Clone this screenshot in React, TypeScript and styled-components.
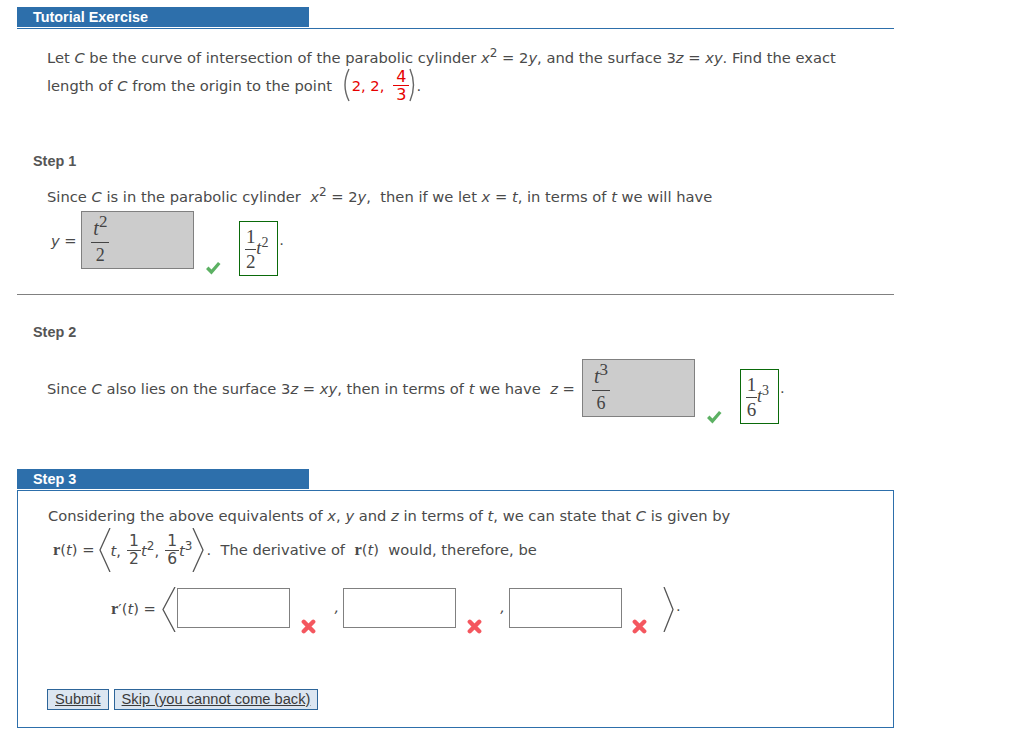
import styled, { createGlobalStyle } from 'styled-components';
import type { ReactNode } from 'react';

const GlobalStyle = createGlobalStyle`
  html, body {
    margin: 0;
    background: #fff;
  }
`;

const BLUE = '#2d6fab';
const TEXT = '#4a4a4a';

const Page = styled.div`
  width: 877px;
  padding: 7px 0 0 17px;
  color: ${TEXT};
  font-family: 'DejaVu Sans', Verdana, sans-serif;
  font-size: 14.7px;
`;

const TitleTab = styled.div`
  width: 276px;
  height: 20px;
  padding-left: 16px;
  background: ${BLUE};
  color: #fff;
  font: bold 14.4px/20px 'Liberation Sans', Arial, sans-serif;
`;

const Rule = styled.div<{ $color: string; $top: number }>`
  height: 1px;
  margin-top: ${(p) => p.$top}px;
  background: ${(p) => p.$color};
`;

const Prompt = styled.div`
  margin: 14px 0 0 30px;
  width: 820px;
`;

const Line = styled.div<{ $height: number }>`
  display: flex;
  align-items: center;
  height: ${(p) => p.$height}px;
  white-space: pre;
`;

const Run = styled.span<{ $left?: number }>`
  margin-left: ${(p) => p.$left ?? 0}px;
`;

const StepLabel = styled.div<{ $top: number }>`
  margin: ${(p) => p.$top}px 0 0 16px;
  color: #555;
  font: bold 14.4px/18px 'Liberation Sans', Arial, sans-serif;
`;

const StepBody = styled.div<{ $top: number }>`
  margin: ${(p) => p.$top}px 0 0 30px;
`;

const AnswerRow = styled.div<{ $height: number; $top: number; $left?: number }>`
  display: flex;
  align-items: flex-start;
  height: ${(p) => p.$height}px;
  margin: ${(p) => p.$top}px 0 0 ${(p) => p.$left ?? 0}px;
  white-space: pre;
`;

const Inline = styled.span<{ $top: number; $left?: number; $right?: number }>`
  margin: ${(p) => p.$top}px ${(p) => p.$right ?? 0}px 0 ${(p) => p.$left ?? 0}px;
  line-height: 18px;
`;

const I = styled.i`
  font-style: italic;
`;

const Sup = styled.sup`
  font-size: 12px;
  line-height: 0;
`;

const Red = styled.span`
  display: inline-flex;
  align-items: center;
  color: #e60000;
`;

const Bold = styled.b`
  font-family: 'Liberation Serif', serif;
  font-size: 16.5px;
`;

const Frac = styled.span<{ $width: number; $left?: number }>`
  display: inline-flex;
  flex-direction: column;
  align-items: center;
  width: ${(p) => p.$width}px;
  margin-left: ${(p) => p.$left ?? 0}px;
`;

const Top = styled.span<{ $size: number; $height: number }>`
  height: ${(p) => p.$height}px;
  font-size: ${(p) => p.$size}px;
  line-height: ${(p) => p.$height}px;
  border-bottom: 1px solid currentColor;
  align-self: stretch;
  text-align: center;
  white-space: nowrap;
`;

const Bottom = styled.span<{ $size: number; $height: number }>`
  height: ${(p) => p.$height}px;
  font-size: ${(p) => p.$size}px;
  line-height: ${(p) => p.$height}px;
`;

const Filled = styled.div<{ $left: number }>`
  box-sizing: border-box;
  flex: none;
  width: 113px;
  height: 58px;
  margin-left: ${(p) => p.$left}px;
  padding: 3px 0 0 9px;
  border: 1px solid #808080;
  background: #ccc;
  color: #444;
  font-family: 'Liberation Serif', serif;
`;

const Correct = styled.div`
  display: flex;
  align-items: center;
  flex: none;
  box-sizing: border-box;
  width: 39px;
  height: 55px;
  margin: 10px 0 0 18px;
  padding-left: 5px;
  border: 1px solid #0a6a0a;
  color: #444;
  font-family: 'Liberation Serif', serif;
`;

const MathPower = styled.span<{ $size: number; $exp: number }>`
  font-style: italic;
  font-size: ${(p) => p.$size}px;
  sup {
    font-style: normal;
    font-size: ${(p) => p.$exp}px;
    line-height: 0;
  }
`;

const Mark = styled.svg<{ $top: number; $left: number }>`
  flex: none;
  margin: ${(p) => p.$top}px 0 0 ${(p) => p.$left}px;
`;

const Panel = styled.div`
  box-sizing: border-box;
  height: 238px;
  margin-top: 1px;
  padding: 14px 0 0 30px;
  border: 1px solid ${BLUE};
`;

const Paren = styled.svg<{ $top?: number; $left?: number; $right?: number }>`
  flex: none;
  margin: ${(p) => p.$top ?? 0}px ${(p) => p.$right ?? 0}px 0 ${(p) => p.$left ?? 0}px;
`;

const BlankInput = styled.input<{ $left: number }>`
  box-sizing: border-box;
  flex: none;
  width: 113px;
  height: 40px;
  margin: 1px 0 0 ${(p) => p.$left}px;
  border: 1px solid #808080;
  background: #fff;
  outline: none;
`;

const Buttons = styled.div`
  display: flex;
  gap: 5px;
  margin: 54px 0 0 -1px;
`;

const LinkButton = styled.button`
  height: 21px;
  padding: 0 7px 1px;
  border: 1px solid #2d6599;
  background: #dce6f1;
  color: #3a3a3a;
  font: 14.65px/18px 'Liberation Sans', Arial, sans-serif;
  text-decoration: underline;
`;

const Spacer = styled.div`
  height: 45px;
`;

const Check = ({ top, left }: { top: number; left: number }) => (
  <Mark $top={top} $left={left} width="16" height="14" viewBox="0 0 16 14">
    <path d="M1 8 L3.5 5.5 L6.5 8.5 L13 1 L15.5 3 L6.5 13.5 Z" fill="#5cb163" />
  </Mark>
);

const Cross = ({ top, left }: { top: number; left: number }) => (
  <Mark $top={top} $left={left} width="15" height="15" viewBox="0 0 15 15">
    <path d="M2.8 2.8 L12.2 12.2 M12.2 2.8 L2.8 12.2" stroke="#f4575f" strokeWidth="4.4" strokeLinecap="round" />
  </Mark>
);

type AngleProps = { height: number; width: number; left?: number; right?: number };

const LeftAngle = ({ height, width, left, right }: AngleProps) => (
  <Paren $left={left} $right={right} width={width} height={height} viewBox={`0 0 ${width} ${height}`}>
    <path d={`M${width - 1} 0 L1 ${height / 2} L${width - 1} ${height}`} fill="none" stroke="#555" strokeWidth="1.3" />
  </Paren>
);

const RightAngle = ({ height, width, left, right }: AngleProps) => (
  <Paren $left={left} $right={right} width={width} height={height} viewBox={`0 0 ${width} ${height}`}>
    <path d={`M1 0 L${width - 1} ${height / 2} L1 ${height}`} fill="none" stroke="#555" strokeWidth="1.3" />
  </Paren>
);

const Power = ({ size, expSize, exp }: { size: number; expSize: number; exp: number }) => (
  <MathPower $size={size} $exp={expSize}>
    t<sup>{exp}</sup>
  </MathPower>
);

const BigFraction = ({ exp, bottom }: { exp: number; bottom: string }) => (
  <Frac $width={18}>
    <Top $size={20} $height={27}><Power size={20} expSize={17} exp={exp} /></Top>
    <Bottom $size={18} $height={24}>{bottom}</Bottom>
  </Frac>
);

const BoxedFraction = ({ exp, bottom }: { exp: number; bottom: string }) => (
  <Correct>
    <Frac $width={11}>
      <Top $size={19} $height={25}>1</Top>
      <Bottom $size={19} $height={24}>{bottom}</Bottom>
    </Frac>
    <Power size={18} expSize={14} exp={exp} />
  </Correct>
);

const SmallFraction = ({ bottom, left }: { bottom: string; left?: number }): ReactNode => (
  <Frac $width={14} $left={left}>
    <Top $size={15.5} $height={17}>1</Top>
    <Bottom $size={15.5} $height={16}>{bottom}</Bottom>
  </Frac>
);

const App = () => {
  return (
    <Page>
      <GlobalStyle />
      <TitleTab>Tutorial Exercise</TitleTab>
      <Rule $color={BLUE} $top={1} />

      <Prompt>
        <Line $height={28}>
          <Run>
            Let <I>C</I> be the curve of intersection of the parabolic cylinder <I>x</I><Sup>2</Sup> = 2<I>y</I>, and the surface 3<I>z</I> = <I>xy</I>. Find the exact
          </Run>
        </Line>
        <Line $height={28}>
          <Run>length of <I>C</I> from the origin to the point{' '}</Run>
          <Paren $left={4} $right={2} width={9} height={34} viewBox="0 0 9 34">
            <path d="M8 1 Q0 17 8 33" fill="none" stroke="#666" strokeWidth="1.4" />
          </Paren>
          <Red>
            <Run>2, 2,</Run>
            <Frac $width={16} $left={9}>
              <Top $size={16} $height={17}>4</Top>
              <Bottom $size={16} $height={17}>3</Bottom>
            </Frac>
          </Red>
          <Paren width={7} height={34} viewBox="0 0 7 34">
            <path d="M1 1 Q8 17 1 33" fill="none" stroke="#666" strokeWidth="1.4" />
          </Paren>
          <Run>.</Run>
        </Line>
      </Prompt>

      <StepLabel $top={53}>Step 1</StepLabel>
      <StepBody $top={16}>
        <Line $height={20}>
          <Run>
            Since <I>C</I> is in the parabolic cylinder{'  '}<I>x</I><Sup>2</Sup> = 2<I>y</I>,{'  '}then if we let <I>x</I> = <I>t</I>, in terms of <I>t</I> we will have
          </Run>
        </Line>
        <AnswerRow $height={65} $top={5}>
          <Inline $top={21} $left={4}><I>y</I> = </Inline>
          <Filled $left={0}>
            <BigFraction exp={2} bottom="2" />
          </Filled>
          <Check top={50} left={11} />
          <BoxedFraction exp={2} bottom="2" />
          <Inline $top={20} $left={1}>.</Inline>
        </AnswerRow>
      </StepBody>
      <Rule $color="#808080" $top={18} />

      <StepLabel $top={28}>Step 2</StepLabel>
      <StepBody $top={18}>
        <AnswerRow $height={65} $top={0}>
          <Inline $top={21}>
            Since <I>C</I> also lies on the surface 3<I>z</I> = <I>xy</I>, then in terms of <I>t</I> we have{'  '}<I>z</I> = 
          </Inline>
          <Filled $left={7}>
            <BigFraction exp={3} bottom="6" />
          </Filled>
          <Check top={51} left={11} />
          <BoxedFraction exp={3} bottom="6" />
          <Inline $top={20} $left={1}>.</Inline>
        </AnswerRow>
      </StepBody>

      <Spacer />
      <TitleTab>Step 3</TitleTab>
      <Panel>
        <Line $height={20}>
          <Run>
            Considering the above equivalents of <I>x</I>, <I>y</I> and <I>z</I> in terms of <I>t</I>, we can state that <I>C</I> is given by
          </Run>
        </Line>
        <Line $height={48} style={{ marginTop: 1 }}>
          <Run $left={5}><Bold>r</Bold>(<I>t</I>) =</Run>
          <LeftAngle width={12} height={44} left={4} />
          <Run><I>t</I>,</Run>
          <SmallFraction bottom="2" left={6} />
          <Run><I>t</I><Sup>2</Sup>,</Run>
          <SmallFraction bottom="6" left={6} />
          <Run><I>t</I><Sup>3</Sup></Run>
          <RightAngle width={12} height={44} />
          <Run $left={2}>.{'  '}The derivative of{'  '}<Bold>r</Bold>(<I>t</I>){'  '}would, therefore, be</Run>
        </Line>
        <AnswerRow $height={48} $top={13} $left={63}>
          <Inline $top={13}><Bold>r</Bold>′(<I>t</I>) = </Inline>
          <LeftAngle width={14} height={45} left={1} />
          <BlankInput $left={1} />
          <Cross top={32} left={11} />
          <Inline $top={11} $left={19} $right={4}><I>,</I></Inline>
          <BlankInput $left={0} />
          <Cross top={32} left={11} />
          <Inline $top={11} $left={18} $right={4}><I>,</I></Inline>
          <BlankInput $left={0} />
          <Cross top={32} left={10} />
          <RightAngle width={11} height={45} left={16} />
          <Inline $top={10} $left={2}>.</Inline>
        </AnswerRow>
        <Buttons>
          <LinkButton>Submit</LinkButton>
          <LinkButton>Skip (you cannot come back)</LinkButton>
        </Buttons>
      </Panel>
    </Page>
  );
};

export default App;
